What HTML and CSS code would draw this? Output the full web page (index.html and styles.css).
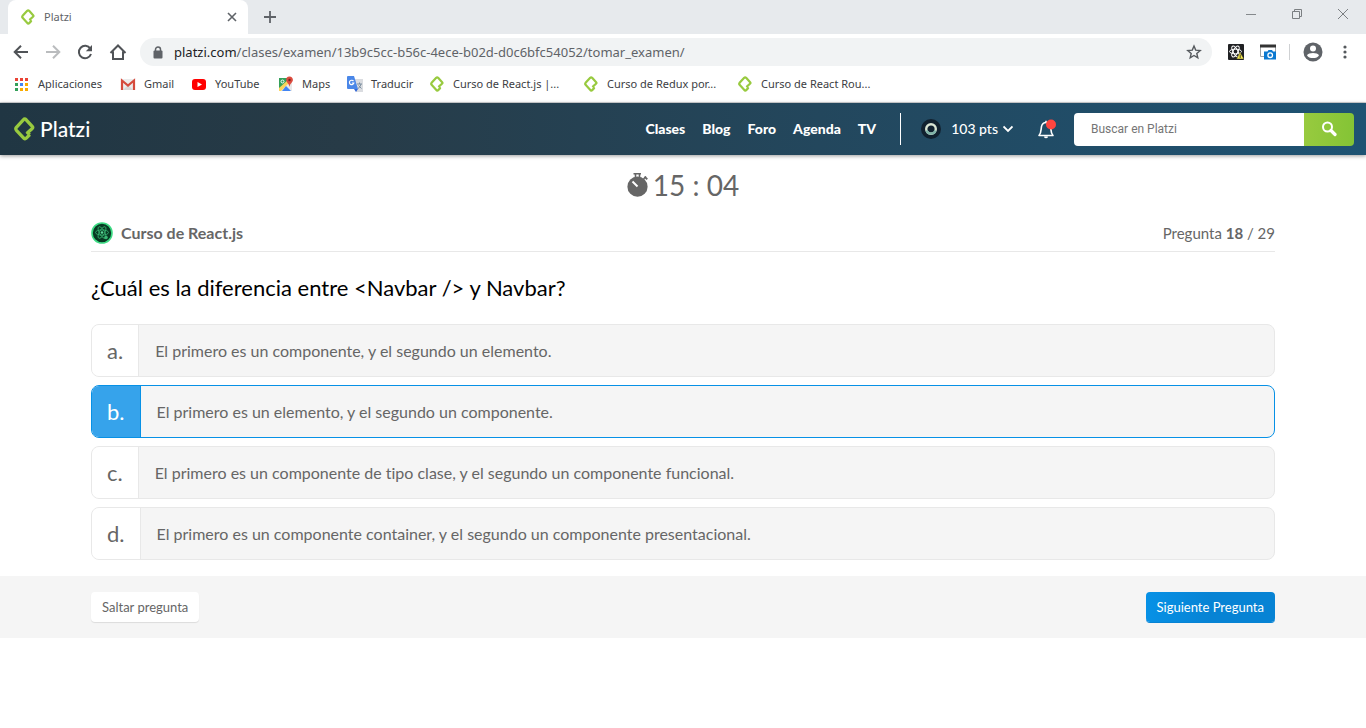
FILE: index.html
```html
<!DOCTYPE html>
<html lang="es">
<head>
<meta charset="utf-8">
<title>Platzi</title>
<link rel="stylesheet" href="styles.css">
</head>
<body>
<svg class="sprite" aria-hidden="true">
  <symbol id="platzi" viewBox="0 0 21 24">
    <path d="M13.2 16 18 11.700Q19.300 10.500 18.200 9.300L12.200 2.800Q10.700 1.400 9.300 2.800L2.400 10.300Q1.200 11.900 2.400 13.300L9.500 20.900Q10.900 22.600 12.300 21.200L15.800 17.600M12.700 14.600 15.600 17.800" fill="none" stroke="#98ca3f" stroke-width="3.300" stroke-linejoin="round"/>
  </symbol>
</svg>

<div class="browser">
  <div class="tabstrip">
    <div class="tab">
      <svg class="fav"><use href="#platzi"/></svg>
      <span class="tab-title">Platzi</span>
      <button class="icon-btn" aria-label="Cerrar pestaña"><svg width="10" height="10" viewBox="0 0 10 10"><path d="M1 1 9 9M9 1 1 9" stroke="#5f6368" stroke-width="1.6"/></svg></button>
    </div>
    <button class="icon-btn new-tab" aria-label="Nueva pestaña"><svg width="12" height="12" viewBox="0 0 12 12"><path d="M6 0V12M0 6H12" stroke="#5f6368" stroke-width="1.800"/></svg></button>
    <div class="window-controls">
      <button class="icon-btn" aria-label="Minimizar"><svg width="12" height="12" viewBox="0 0 12 12"><path d="M1 6.500H11" stroke="#85898c"/></svg></button>
      <button class="icon-btn" aria-label="Restaurar"><svg width="12" height="12" viewBox="0 0 12 12" fill="none" stroke="#7b7f82"><path d="M1.500 3.500H8.500V10.500H1.500ZM3.500 3.500V1.500H10.500V8.500H8.500"/></svg></button>
      <button class="icon-btn" aria-label="Cerrar"><svg width="12" height="12" viewBox="0 0 12 12"><path d="M1 1 11 11M11 1 1 11" stroke="#7b7f82"/></svg></button>
    </div>
  </div>

  <div class="toolbar">
    <button class="icon-btn" aria-label="Atrás"><svg width="16" height="16" viewBox="0 0 16 16" fill="none" stroke="#505357" stroke-width="2"><path d="M15 8H2M8 1.700 1.700 8 8 14.300"/></svg></button>
    <button class="icon-btn" aria-label="Adelante"><svg width="16" height="16" viewBox="0 0 16 16" fill="none" stroke="#babcbe" stroke-width="2"><path d="M1 8H14M8 1.700 14.300 8 8 14.300"/></svg></button>
    <button class="icon-btn" aria-label="Recargar"><svg width="16" height="16" viewBox="0 0 16 16"><path d="M13.300 4.600A6.200 6.200 0 1 0 14 10" fill="none" stroke="#505357" stroke-width="2"/><path d="M15 1V7.200H8.800Z" fill="#505357"/></svg></button>
    <button class="icon-btn" aria-label="Inicio"><svg width="18" height="16" viewBox="0 0 18 16"><path d="M1.500 9 9 1.500 16.500 9M4 7.500V15H14V7.500" fill="none" stroke="#505357" stroke-width="2"/></svg></button>
    <div class="omnibox">
      <svg width="10" height="13" viewBox="0 0 10 13"><path d="M2.500 6V3.500a2.500 2.500 0 0 1 5 0V6" fill="none" stroke="#5f6368" stroke-width="1.500"/><rect y="4.500" x="0.500" width="9" height="8" rx="1" fill="#5f6368"/></svg>
      <span class="url"><b>platzi.com</b>/clases/examen/13b9c5cc-b56c-4ece-b02d-d0c6bfc54052/tomar_examen/</span>
      <button class="icon-btn" aria-label="Añadir a marcadores"><svg width="16" height="16" viewBox="0 0 16 16"><path d="M8 2 9.700 6.100 14.200 6.500 10.800 9.400 11.800 13.800 8 11.500 4.200 13.800 5.200 9.400 1.800 6.500 6.300 6.100Z" fill="none" stroke="#55595d" stroke-width="1.400"/></svg></button>
    </div>
    <div class="extensions">
      <svg width="16" height="16" viewBox="0 0 16 16"><rect width="16" height="16" rx="1" fill="#202124"/><g fill="none" stroke="#fff"><ellipse cx="7.500" cy="7.500" rx="6" ry="2.300"/><ellipse cx="7.500" cy="7.500" rx="6" ry="2.300" transform="rotate(60 7.500 7.500)"/><ellipse cx="7.500" cy="7.500" rx="6" ry="2.300" transform="rotate(120 7.500 7.500)"/></g><path d="M12 8 16 15H8.500Z" fill="#f5e94c" stroke="#202124" stroke-width=".5"/><path d="M12.200 10.500V14" stroke="#4b4820"/></svg>
      <svg width="16" height="16" viewBox="0 0 16 16"><path d="M.5 1V12.500H15.500V1" fill="#fff" stroke="#9da1a4"/><path d="M0 .5H16V3.500H0Z" fill="#333"/><path d="M4 7.500H7.500L8.500 6H12L13 7.500H16V15.500H4Z" fill="#0b78d0"/><circle cx="10.200" cy="11.200" r="2.300" fill="none" stroke="#fff" stroke-width="1.300"/></svg>
      <span class="rule"></span>
      <svg width="20" height="20" viewBox="0 0 20 20"><circle cx="10" cy="10" r="9.500" fill="#5f6368"/><circle cx="10" cy="6.500" r="3" fill="#fff"/><path d="M4 13.200C5.500 10.300 14.500 10.300 16 13.200 14.500 17 5.500 17 4 13.200Z" fill="#fff"/></svg>
      <button class="icon-btn menu" aria-label="Menú"><svg width="4" height="16" viewBox="0 0 4 16" fill="#55595d"><circle cx="2" cy="3" r="1.600"/><circle cx="2" cy="8" r="1.600"/><circle cx="2" cy="13" r="1.600"/></svg></button>
    </div>
  </div>

  <div class="bookmarks">
    <a href="#"><svg width="16" height="16" viewBox="0 0 16 16"><path d="M1 2h3v3H1zM6 2h3v3H6zM11 2h3v3h-3z" fill="#ea4335"/><path d="M1 7h3v3H1z" fill="#34a05a"/><path d="M6 7h3v3H6z" fill="#4285f4"/><path d="M11 7h3v3h-3zM11 12h3v3h-3zM6 12h3v3H6z" fill="#f9ab00"/><path d="M1 12h3v3H1z" fill="#34a05a"/></svg>Aplicaciones</a>
    <a href="#"><svg width="16" height="16" viewBox="0 0 16 16"><path d="M1 3H15V14H1Z" fill="#ececec"/><path d="M3 14 8 9 13 14" fill="#d8d8d8"/><path d="M2 14V4.500L8 9.500 14 4.500V14" fill="none" stroke="#d54b3d" stroke-width="2.200"/></svg>Gmail</a>
    <a href="#"><svg width="16" height="16" viewBox="0 0 16 16"><rect x="1" y="3" width="14" height="11" rx="3" fill="#f00"/><path d="M6.500 6 11 8.500 6.500 11Z" fill="#fff"/></svg>YouTube</a>
    <a href="#"><svg width="16" height="16" viewBox="0 0 16 16"><path d="M1 2H14V15H1Z" fill="#34a05a"/><path d="M1 13 12 4 14 6V15H1Z" fill="#e8e8e8"/><path d="M1 15V12L11 3 13 5 3 15Z" fill="#fbd45b"/><path d="M4 15 8 10 13 15Z" fill="#4285f4"/><circle cx="4.500" cy="5.500" r="1.500" fill="none" stroke="#fff"/><path d="M11.500 0.500A3.300 3.300 0 0 0 8.200 4C8.200 6.500 11 7 11.500 11 12 7 14.900 6.500 14.900 4A3.300 3.300 0 0 0 11.500.500Z" fill="#dc4b3e"/><circle cx="11.500" cy="4" r="1.200" fill="#7b231c"/></svg>Maps</a>
    <a href="#"><svg width="16" height="16" viewBox="0 0 16 16"><path d="M6 3H16V16H9Z" fill="#dadce0"/><path d="M0 1Q0 0 1 0H7L11 13H1Q0 13 0 12Z" fill="#4a87e8"/><path d="M9 16 11 13H7Z" fill="#3367d6"/><path d="M6.500 5.200A2.200 2.200 0 1 0 6.800 7H4.800" fill="none" stroke="#fff" stroke-width="1.200"/><path d="M10 8H15M12.500 6.500V8M14 8Q13.500 11 11 12.500M11.500 9.500 14.500 12.500" fill="none" stroke="#7c8fa0"/></svg>Traducir</a>
    <a href="#"><svg class="fav"><use href="#platzi"/></svg>Curso de React.js |...</a>
    <a href="#"><svg class="fav"><use href="#platzi"/></svg>Curso de Redux por...</a>
    <a href="#"><svg class="fav"><use href="#platzi"/></svg>Curso de React Rou...</a>
  </div>
</div>

<header class="site-header">
  <a class="brand" href="#"><svg class="brand-mark"><use href="#platzi"/></svg>Platzi</a>
  <nav class="nav">
    <a href="#">Clases</a><a href="#">Blog</a><a href="#">Foro</a><a href="#">Agenda</a><a href="#">TV</a>
  </nav>
  <button class="user">
    <svg width="20" height="20" viewBox="0 0 20 20"><circle cx="10" cy="10" r="10" fill="#11212f"/><circle cx="10" cy="10" r="4.800" fill="none" stroke="#d9e4d3" stroke-width="2.400"/><path d="M5.500 11.500A4.800 4.800 0 0 0 14.500 11.500" fill="none" stroke="#7fb3a8" stroke-width="2.200"/></svg>
    <span>103 pts</span>
    <svg width="10" height="8" viewBox="0 0 10 8"><path d="M.5 1.500 5 6 9.500 1.500" fill="none" stroke="#fff" stroke-width="1.800"/></svg>
  </button>
  <button class="icon-btn bell" aria-label="Notificaciones"><svg width="20" height="20" viewBox="0 0 20 20"><path d="M2 16.500C5 13.500 3.500 9 5 6Q6.200 3.500 9 3.500 12 3.500 13 6C14.500 9 13 13.500 16 16.500Z" fill="none" stroke="#fff" stroke-width="1.600" stroke-linejoin="round"/><path d="M7.500 17.500Q9 19.700 10.500 17.500M9 1.800V3.500" fill="none" stroke="#fff" stroke-width="1.500"/><circle cx="14" cy="5.500" r="5" fill="#ff453f"/></svg></button>
  <form class="search">
    <input type="text" placeholder="Buscar en Platzi" aria-label="Buscar en Platzi">
    <button type="button" aria-label="Buscar"><svg width="16" height="16" viewBox="0 0 16 16"><circle cx="6.500" cy="6" r="4.500" fill="none" stroke="#fff" stroke-width="2"/><path d="M10 9.500 14 13.500" stroke="#fff" stroke-width="3.200" stroke-linecap="round"/></svg></button>
  </form>
</header>

<main>
  <div class="wrap">
    <div class="timer">
      <svg width="22" height="24" viewBox="0 0 22 24"><circle cx="10.500" cy="13.700" r="10.100" fill="#666"/><path d="M6.500.8H14M8.500 1V4M12.500 1V4M16.500 6 19 3.500" stroke="#666" stroke-width="1.600"/><path d="M17.500 3.800 20.300 6.200" stroke="#666" stroke-width="1.800"/><path d="M5.500 8.500 10.500 13.500" stroke="#fff" stroke-width="2"/></svg>
      <span>15 : 04</span>
    </div>
    <div class="course">
      <svg width="22" height="22" viewBox="0 0 22 22"><circle cx="11" cy="11" r="10" fill="#083a23" stroke="#3ddc84" stroke-width="1.600"/><g fill="none" stroke="#38b673" stroke-width=".8"><ellipse cx="11" cy="10.500" rx="6.500" ry="2.600"/><ellipse cx="11" cy="10.500" rx="6.500" ry="2.600" transform="rotate(60 11 10.500)"/><ellipse cx="11" cy="10.500" rx="6.500" ry="2.600" transform="rotate(120 11 10.500)"/></g><circle cx="11" cy="10.500" r="1.300" fill="#5cd596"/><circle cx="15" cy="15.500" r="1.800" fill="#38b673"/></svg>
      <h1>Curso de React.js</h1>
      <p>Pregunta <b>18</b> / 29</p>
    </div>
    <form>
      <fieldset class="options">
        <legend>¿Cuál es la diferencia entre &lt;Navbar /&gt; y Navbar?</legend>
        <label class="option"><input type="radio" name="r"><span class="letter">a.</span><span class="answer">El primero es un componente, y el segundo un elemento.</span></label>
        <label class="option"><input type="radio" name="r" checked><span class="letter">b.</span><span class="answer">El primero es un elemento, y el segundo un componente.</span></label>
        <label class="option"><input type="radio" name="r"><span class="letter">c.</span><span class="answer">El primero es un componente de tipo clase, y el segundo un componente funcional.</span></label>
        <label class="option"><input type="radio" name="r"><span class="letter">d.</span><span class="answer">El primero es un componente container, y el segundo un componente presentacional.</span></label>
      </fieldset>
    </form>
  </div>
  <div class="actions">
    <div class="wrap">
      <button class="btn">Saltar pregunta</button>
      <button class="btn primary">Siguiente Pregunta</button>
    </div>
  </div>
</main>
</body>
</html>
```
FILE: styles.css
```css
* { box-sizing: border-box; }
body { margin: 0; background: #fff; color: #666; font: 16px/24px Lato, sans-serif; font-variant-ligatures: none; }
svg { display: block; flex: none; }
a { color: inherit; text-decoration: none; }
button { border: 0; padding: 0; background: none; color: inherit; font: inherit; cursor: pointer; }
h1, p { margin: 0; }
.sprite { position: absolute; width: 0; height: 0; }
.icon-btn { display: flex; align-items: center; justify-content: center; }
.fav { width: 16px; height: 16px; }

/* Browser frame */
.browser { border-bottom: 1px solid #d5d7d9; font: 12px/16px "Noto Sans", sans-serif; }
.tabstrip { display: flex; align-items: center; height: 34px; background: #e7eaed; }
.tab { display: flex; align-items: center; gap: 8px; width: 240px; height: 34px; margin-left: 8px; padding: 0 11px 0 12px; background: #fff; border-radius: 8px 8px 0 0; color: #5f6368; }
.tab-title { flex: 1; font-size: 11px; }
.new-tab { margin-left: 16px; }
.window-controls { display: flex; gap: 34px; margin: -6px 17px 0 auto; }
.toolbar { display: flex; align-items: center; gap: 16px; height: 36px; padding: 0 19px 0 13px; }
.omnibox { display: flex; flex: 1; align-items: center; gap: 11px; height: 28px; margin-left: -3px; padding: 0 10px 0 13px; background: #f1f3f4; border-radius: 14px; }
.url { flex: 1; color: #5f6368; font-size: 13px; line-height: 20px; }
.url b { color: #202124; font-weight: 400; }
.extensions { display: flex; align-items: center; gap: 16px; }
.extensions .rule { width: 1px; height: 16px; margin: 0 -3px; background: #cfd1d3; }
.menu { margin-left: 4px; }
.bookmarks { display: grid; grid-template-columns: 106px 71px 87px 69px 82px 154px 154px 154px; height: 32px; padding: 0 14px 4px; color: #3c4043; }
.bookmarks a { display: flex; align-items: center; gap: 8px; white-space: nowrap; font-size: 11px; }

/* Site header */
.site-header { display: flex; align-items: center; height: 52px; padding: 0 12px 0 14px; background: linear-gradient(90deg, #203643, #273b47 25%, #23475d 60%, #1e5373); box-shadow: 0 1px 4px rgba(0, 0, 0, .4); color: #fff; }
.brand { display: flex; align-items: center; gap: 5px; margin-right: auto; font: 500 21px/24px Lato, sans-serif; }
.brand-mark { width: 21px; height: 24px; }
.nav { display: flex; gap: 17px; padding-right: 24px; border-right: 1px solid #fff; font-size: 14px; line-height: 32px; font-weight: 900; }
.user { display: flex; align-items: center; margin-left: 20px; font-size: 14px; line-height: 20px; font-weight: 500; }
.user span { margin: 0 5px 0 10px; }
.bell { margin: 0 17px 0 24px; }
.search { display: flex; width: 280px; height: 33px; border-radius: 4px; overflow: hidden; }
.search input { flex: 1; min-width: 0; padding: 0 17px; border: 0; background: #fff; font: 12px/16px Roboto, sans-serif; }
.search input::placeholder { color: #757575; }
.search button { display: flex; align-items: center; justify-content: center; width: 50px; background: linear-gradient(90deg, #98ca3f, #84c435); }

/* Exam */
.wrap { width: calc(100% - 32px); max-width: 1184px; margin: 0 auto; }
.timer { display: flex; align-items: center; justify-content: center; gap: 4px; padding-top: 12px; font-size: 28px; line-height: 36px; }
.course { display: flex; align-items: center; gap: 8px; margin-top: 12px; padding: 6px 0; border-bottom: 1px solid #e8e8e8; }
.course h1 { flex: 1; font-size: 16px; line-height: 24px; }
.course p { font-size: 15px; }
.options { display: grid; gap: 8px; margin: 0; padding: 0; border: 0; }
.options legend { padding: 20px 0; color: #000; font-size: 22px; line-height: 32px; }
.option { position: relative; display: flex; height: 53px; border: 1px solid #e8e8e8; border-radius: 8px; background: #f5f5f5; overflow: hidden; cursor: pointer; }
.option input { position: absolute; inset: 0; margin: 0; appearance: none; }
.letter { padding: 0 15px; border-right: 1px solid #e8e8e8; background: #fff; font-size: 22px; line-height: 52px; }
.answer { padding: 0 16px; line-height: 51px; }
.option:has(input:checked) { border-color: #0791e6; }
.option input:checked + .letter { border-color: #0791e6; background: #36a3eb; color: #fff; }
.actions { margin-top: 16px; padding: 16px 0; background: #f5f5f5; }
.actions .wrap { display: flex; justify-content: space-between; }
.btn { height: 30px; padding: 0 11px; border-radius: 4px; background: #fff; box-shadow: 0 1px 1px rgba(0, 0, 0, .1); font-size: 13px; line-height: 30px; }
.primary { background: linear-gradient(90deg, #0791e6, #0783d4 50%); box-shadow: 0 1px 0 #0783d4; color: #fff; }
```
